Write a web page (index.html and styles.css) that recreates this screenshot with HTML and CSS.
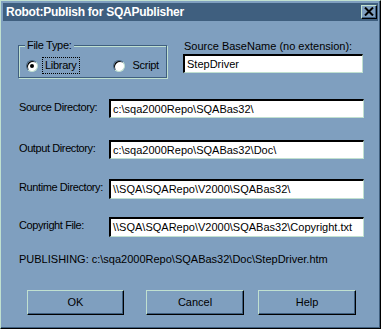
FILE: index.html
```html
<!DOCTYPE html>
<html>
<head>
<meta charset="utf-8">
<link rel="stylesheet" href="styles.css">
</head>
<body>
<div class="window">
  <div class="titlebar">
    <span class="title">Robot:Publish for SQAPublisher</span>
    <span class="close">
      <svg width="10" height="9" viewBox="0 0 10 9"><path d="M1 0.5 L9 8.5 M9 0.5 L1 8.5" stroke="#000" stroke-width="2" fill="none"/></svg>
    </span>
  </div>
  <div class="content">
    <div class="top-row">
      <div class="group">
        <span class="group-label">File Type:</span>
        <div class="radios">
          <span class="radio-item first">
            <span class="radio checked"><span class="dot"></span></span>
            <span class="radio-text focus">Library</span>
          </span>
          <span class="radio-item second">
            <span class="radio"></span>
            <span class="radio-text">Script</span>
          </span>
        </div>
      </div>
      <div class="basename">
        <div class="bn-label">Source BaseName (no extension):</div>
        <div class="input bn-input">StepDriver</div>
      </div>
    </div>
    <div class="row r1">
      <span class="label">Source Directory:</span>
      <div class="input wide">c:\sqa2000Repo\SQABas32\</div>
    </div>
    <div class="row r2">
      <span class="label">Output Directory:</span>
      <div class="input wide">c:\sqa2000Repo\SQABas32\Doc\</div>
    </div>
    <div class="row r3">
      <span class="label">Runtime Directory:</span>
      <div class="input wide">\\SQA\SQARepo\V2000\SQABas32\</div>
    </div>
    <div class="row r4">
      <span class="label">Copyright File:</span>
      <div class="input wide">\\SQA\SQARepo\V2000\SQABas32\Copyright.txt</div>
    </div>
    <div class="publishing">PUBLISHING: c:\sqa2000Repo\SQABas32\Doc\StepDriver.htm</div>
    <div class="buttons">
      <div class="btn b-ok">OK</div>
      <div class="btn b-cancel">Cancel</div>
      <div class="btn b-help">Help</div>
    </div>
  </div>
</div>
</body>
</html>
```
FILE: styles.css
```css
html, body {
  margin: 0;
  padding: 0;
  background: #7f9fbf;
}
body {
  width: 381px;
  height: 329px;
  overflow: hidden;
  font-family: "Liberation Sans", Arial, sans-serif;
  font-size: 11px;
  letter-spacing: 0;
  color: #000;
}
.window {
  box-sizing: border-box;
  width: 381px;
  height: 329px;
  border-left: 1px solid #c0e0d0;
  border-top: 1px solid #c0e0d0;
  border-right: 1px solid #000;
  border-bottom: 1px solid #000;
  box-shadow: inset -1px -1px 0 #3f5f7f;
  padding: 2px 2px 2px 2px;
  display: flex;
  flex-direction: column;
}
.titlebar {
  height: 18px;
  background: #3f5f7f;
  display: flex;
  align-items: center;
  justify-content: space-between;
  flex-shrink: 0;
}
.title {
  color: #fff;
  font-weight: bold;
  font-size: 12px;
  letter-spacing: -0.25px;
  padding-left: 3px;
}
.close {
  box-sizing: border-box;
  width: 16px;
  height: 14px;
  margin-right: 1px;
  background: #7f9fbf;
  border-left: 1px solid #c0e0d0;
  border-top: 1px solid #c0e0d0;
  border-right: 1px solid #000;
  border-bottom: 1px solid #000;
  box-shadow: inset -1px -1px 0 #3f5f7f;
  display: flex;
  align-items: center;
  justify-content: center;
}
.close svg { display: block; margin: 0 1px 1px 0; }
.content {
  padding-left: 15px;
}
.top-row {
  display: flex;
  margin-top: 23px;
}
.group {
  box-sizing: border-box;
  width: 149px;
  height: 33px;
  border: 1px solid #3f5f7f;
  box-shadow: 1px 1px 0 #c0e0d0, inset 1px 1px 0 #c0e0d0;
  margin-top: 1px;
  letter-spacing: -0.3px;
}
.group-label {
  display: inline-block;
  background: #7f9fbf;
  margin-left: 6px;
  margin-top: -7px;
  padding: 0 2px;
  line-height: 13px;
  vertical-align: top;
}
.radios {
  display: flex;
  margin-top: -1px;
}
.radio-item {
  display: flex;
  align-items: center;
}
.radio-item.first { margin-left: 7px; }
.radio-item.second { margin-left: 33px; }
.radio {
  box-sizing: border-box;
  width: 12px;
  height: 12px;
  border-radius: 50%;
  background: #fff;
  border: 1px solid;
  border-color: #3f5f7f #c0e0d0 #c0e0d0 #3f5f7f;
  box-shadow: inset 1px 1px 0 #000;
  display: flex;
  align-items: center;
  justify-content: center;
}
.dot {
  width: 4px;
  height: 4px;
  border-radius: 50%;
  background: #000;
}
.radio-text {
  margin-left: 5px;
  line-height: 13px;
  padding: 1px 2px 1px 2px;
  border: 1px dotted transparent;
}
.radio-text.focus {
  border-color: #000;
  margin-left: 4px;
}
.basename {
  margin-left: 16px;
  margin-top: -4px;
}
.bn-label {
  padding-left: 1px;
  line-height: 13px;
  margin-bottom: 1px;
}
.input {
  box-sizing: border-box;
  height: 19px;
  background: #fff;
  border-top: 2px solid #000;
  border-left: 2px solid #000;
  border-right: 1px solid #c0e0d0;
  border-bottom: 1px solid #c0e0d0;
  padding-left: 2px;
  line-height: 16px;
  white-space: nowrap;
  overflow: hidden;
}
.bn-input { width: 180px; }
.wide { width: 255px; }
.row {
  display: flex;
  align-items: center;
}
.label {
  width: 90px;
  padding-left: 1px;
  padding-bottom: 4px;
  letter-spacing: -0.4px;
}
.r1 { margin-top: 21px; }
.r2 { margin-top: 22px; height: 19px; }
.r3 { margin-top: 20px; }
.r4 { margin-top: 18px; }
.r3 .input, .r4 .input { height: 20px; }
.publishing {
  margin-top: 16px;
  padding-left: 1px;
  line-height: 13px;
}
.buttons {
  display: flex;
  margin-top: 24px;
}
.btn {
  box-sizing: border-box;
  height: 25px;
  border-left: 1px solid #c0e0d0;
  border-top: 1px solid #c0e0d0;
  border-right: 1px solid #000;
  border-bottom: 1px solid #000;
  box-shadow: inset -1px -1px 0 #3f5f7f;
  display: flex;
  align-items: center;
  justify-content: center;
  padding-bottom: 1px;
}
.b-ok { width: 97px; margin-left: 9px; }
.b-cancel { width: 98px; margin-left: 22px; }
.b-help { width: 98px; margin-left: 14px; }
```
